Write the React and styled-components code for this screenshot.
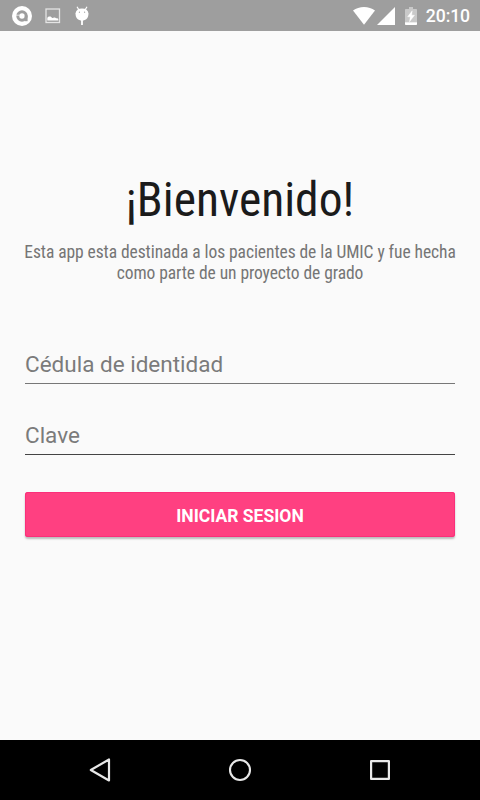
import React from 'react';
import styled, { createGlobalStyle } from 'styled-components';

const App = () => {
  return (
    <>
      <GlobalStyle />
      <Screen>
        <StatusBar>
          <Notifications>
            <AvastIcon />
            <PictureIcon />
            <AndroidIcon />
          </Notifications>
          <SystemIcons>
            <WifiIcon />
            <SignalIcon />
            <BatteryIcon />
            <Clock>20:10</Clock>
          </SystemIcons>
        </StatusBar>
        <Content>
          <Title>¡Bienvenido!</Title>
          <Subtitle>
            <span>Esta app esta destinada a los pacientes de la UMIC y fue hecha</span>
            <span>como parte de un proyecto de grado</span>
          </Subtitle>
          <Form onSubmit={(e) => e.preventDefault()}>
            <Field type="text" placeholder="Cédula de identidad" $line="#777777" />
            <Field type="password" placeholder="Clave" $line="#444444" />
            <Button type="submit">INICIAR SESION</Button>
          </Form>
        </Content>
        <NavBar>
          <BackIcon />
          <HomeIcon />
          <RecentIcon />
        </NavBar>
      </Screen>
    </>
  );
}

const AvastIcon = () => (
  <svg width="20" height="20" viewBox="0 0 20 20">
    <circle cx="10" cy="10" r="10" fill="#fff" />
    <circle cx="10" cy="10" r="4.2" fill="none" stroke="#9e9e9e" strokeWidth="3" />
    <path d="M14.2 9.5v5.7" stroke="#9e9e9e" strokeWidth="2.8" />
    <path d="M4 9.2h3.6" stroke="#fff" strokeWidth="0.7" />
  </svg>
);

const PictureIcon = () => (
  <svg width="16" height="16" viewBox="0 0 16 16">
    <rect x="1" y="1" width="13.5" height="13.5" fill="none" stroke="#e4e4e4" strokeWidth="1.3" />
    <path d="M2.3 12.5V10c.6-1.4 3-1.8 3.9-.9.8 1 1.4 1.3 2.2.7 1-.7 2.2-.3 2.7.5.9-.3 2 .1 2.2.9v1.3z" fill="#fff" />
  </svg>
);

const AndroidIcon = () => (
  <svg width="14" height="20" viewBox="0 0 14 20">
    <path d="M2 0.7 4 4M12 0.7 10 4" stroke="#fff" strokeWidth="1.2" />
    <path d="M0.5 7.5C1 4.3 3.2 2.5 7 2.5s6 1.8 6.5 5C13.5 12 11 14.5 7 14.5S.5 12 .5 7.5z" fill="#fff" />
    <path d="M6.1 14h1.8v5H6.1z" fill="#fff" />
    <circle cx="4.4" cy="6.2" r="0.6" fill="#9e9e9e" />
    <circle cx="9.6" cy="6.2" r="0.6" fill="#9e9e9e" />
  </svg>
);

const WifiIcon = () => (
  <svg width="22" height="18" viewBox="0 0 22 18">
    <path d="M0 3.6C6-1.2 16-1.2 22 3.6L11 17.8z" fill="#fff" />
  </svg>
);

const SignalIcon = () => (
  <svg width="18" height="18" viewBox="0 0 18 18">
    <path d="M18 0v18H0z" fill="#fff" />
  </svg>
);

const BatteryIcon = () => (
  <svg width="12" height="18" viewBox="0 0 12 18">
    <path d="M4 0h4v2h3.2c.5 0 .8.3.8.8V15.5H0V2.8C0 2.3.3 2 .8 2H4z" fill="#c9c9c9" />
    <path d="M0 15.2h12v2c0 .5-.3.8-.8.8H.8c-.5 0-.8-.3-.8-.8z" fill="#fff" />
    <path d="M7.2 3.8 2.6 9.8h2.7L4.5 14.8l5-6.6H6.7z" fill="#fff" stroke="#fff" strokeWidth="0.4" />
  </svg>
);

const BackIcon = () => (
  <svg width="24" height="26" viewBox="0 0 24 26">
    <path d="M21 2.5v21L2.8 13z" fill="none" stroke="#e8e8e8" strokeWidth="2.2" strokeLinejoin="round" />
  </svg>
);

const HomeIcon = () => (
  <svg width="24" height="24" viewBox="0 0 24 24">
    <circle cx="12" cy="12" r="10" fill="none" stroke="#e8e8e8" strokeWidth="2.1" />
  </svg>
);

const RecentIcon = () => (
  <svg width="24" height="24" viewBox="0 0 24 24">
    <rect x="3.1" y="3.1" width="17.8" height="17.8" fill="none" stroke="#e8e8e8" strokeWidth="2.2" strokeLinejoin="round" />
  </svg>
);

const GlobalStyle = createGlobalStyle`
  * {
    box-sizing: border-box;
  }

  body {
    margin: 0;
    font-family: Roboto, sans-serif;
  }
`;

const Screen = styled.div`
  display: flex;
  flex-direction: column;
  width: 480px;
  height: 800px;
  overflow: hidden;
  background: #fafafa;
`;

const StatusBar = styled.header`
  display: flex;
  justify-content: space-between;
  flex: none;
  height: 31px;
  padding: 0 10px 0 12px;
  background: #9e9e9e;
`;

const Notifications = styled.div`
  display: flex;
  align-items: center;
  gap: 13px;

  svg:last-child {
    margin-left: 1px;
  }
`;

const SystemIcons = styled.div`
  display: flex;
  align-items: center;
  gap: 2px;

  svg:nth-child(3) {
    margin-left: 8px;
  }
`;

const Clock = styled.span`
  margin-left: 7px;
  padding-top: 2px;
  color: #fff;
  font-size: 17.6px;
  font-weight: 500;
  letter-spacing: -0.1px;
  line-height: 31px;
`;

const Content = styled.main`
  display: flex;
  flex-direction: column;
  flex: 1;
  padding: 141px 25px 0;
`;

const Title = styled.h1`
  margin: 0;
  color: #1b1b1b;
  font-family: 'Roboto Condensed', Roboto, sans-serif;
  font-size: 47.5px;
  font-stretch: 75%;
  font-weight: 400;
  line-height: 56px;
  text-align: center;
`;

const Subtitle = styled.p`
  display: flex;
  flex-direction: column;
  align-items: center;
  margin: 14px 0 0;
  color: #757575;
  font-family: 'Roboto Condensed', Roboto, sans-serif;
  font-size: 17.5px;
  font-stretch: 75%;
  letter-spacing: -0.07px;
  line-height: 21px;
  white-space: nowrap;
`;

const Form = styled.form`
  display: flex;
  flex-direction: column;
  margin-top: 61px;
`;

const Field = styled.input`
  height: 39px;
  margin-bottom: 32px;
  padding: 0;
  border: 0;
  border-bottom: 1px solid ${(props) => props.$line};
  outline: none;
  background: transparent;
  color: #212121;
  font-family: Roboto, sans-serif;
  font-size: 22.5px;

  &::placeholder {
    color: #7b7b7b;
    opacity: 1;
  }
`;

const Button = styled.button`
  height: 45px;
  margin-top: 5px;
  padding: 2px 0 0;
  border: 0;
  border-radius: 3px;
  background: #ff4081;
  box-shadow: inset 0 0 0 1px #fb2f7a, 0 2px 2px rgba(0, 0, 0, 0.25);
  color: #fff;
  font-family: Roboto, sans-serif;
  font-size: 17.5px;
  font-weight: 700;
`;

const NavBar = styled.nav`
  display: flex;
  align-items: center;
  justify-content: space-between;
  flex: none;
  height: 60px;
  padding: 0 88px;
  background: #000;
`;

export default App;
